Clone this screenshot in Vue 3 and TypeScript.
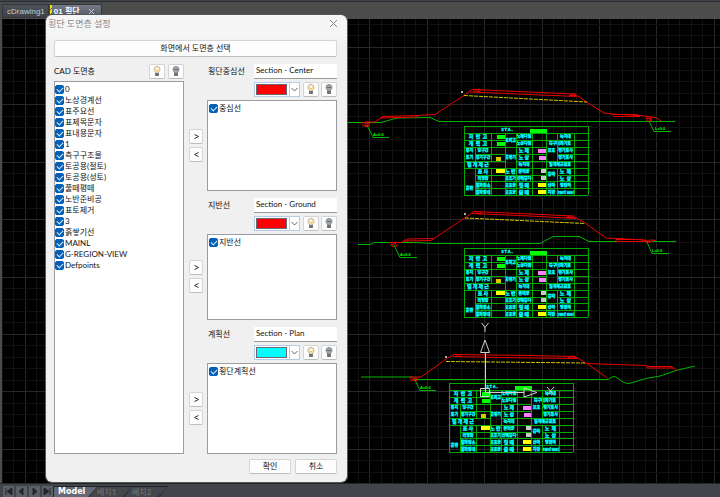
<script setup lang="ts">
import { ref } from 'vue'

interface Layer { name: string; on: boolean }
interface Section { title: string; target: string; color: string; layers: Layer[] }
interface Point { x: number; y: number }
interface Box { x: number; y: number; w: number; h: number; color: string }
interface Mark extends Point { text: string }
interface Stroke { pts: string; color: string; dash?: string }

const make = (names: string[]): Layer[] => names.map((name) => ({ name, on: true }))

const cadLayers = ref<Layer[]>(make([
  '0', '노상경계선', '표주요선', '표제목문자', '표내용문자', '1', '측구구조물',
  '토공용(절토)', '토공용(성토)', '풀떼평떼', '노반준비공', '표토제거', '3',
  '흙쌓기선', 'MAINL', 'G-REGION-VIEW', 'Defpoints',
]))

const sections = ref<Section[]>([
  { title: '횡단중심선', target: 'Section - Center', color: '#ff0000', layers: make(['중심선']) },
  { title: '지반선', target: 'Section - Ground', color: '#ff0000', layers: make(['지반선']) },
  { title: '계획선', target: 'Section - Plan', color: '#00ffff', layers: make(['횡단계획선']) },
])

const colors = [
  { value: '#ff0000', label: '빨강' },
  { value: '#00ffff', label: '하늘색' },
]

const navButtons = [
  { name: '처음', d: 'M3 2v7M9 2v7L4 5.500Z' },
  { name: '이전', d: 'M7 2v7L3 5.500Z' },
  { name: '다음', d: 'M4 2v7L8 5.500Z' },
  { name: '마지막', d: 'M8 2v7M2 2v7L7 5.500Z' },
]

// Background grid: a strong line after every five fine ones.
const STEP = 11.48
const gridLines = (first: number, count: number) =>
  Array.from({ length: count }, (_, i) => ({ at: first + i * STEP, major: i % 5 === 0 }))
const columns = gridLines(-32, 160)
const rows = gridLines(-10, 120)

// Quantity table, in units relative to its top-left corner.
const R = 6.93
const hLines = [
  [0, 0, 124.4], [1, 0, 124.4], [2, 0, 41], [2, 52, 124.4], [3, 0, 82.4], [3, 93, 124.4],
  [4, 11, 41], [4, 52, 82.4], [4, 93, 124.4], [5, 0, 41], [5, 52, 124.4], [6, 0, 124.4],
  [7, 11, 82.4], [7, 93, 124.4], [8, 11, 124.4], [9, 11, 124.4], [10, 0, 124.4],
]
const vLines = [
  [0, 0, 10], [11, 3, 5], [11, 6, 10], [27.3, 1, 5], [27.3, 6, 10], [41, 1, 10], [52, 1, 10],
  [68.4, 1, 10], [82.4, 1, 10], [93, 1, 5], [93, 6, 10], [110, 1, 10], [124.4, 0, 10],
]
const boxes: Box[] = [
  { x: 66, y: 3, w: 17, h: 4, color: '#00ff00' },
  { x: 33, y: 9, w: 8, h: 4, color: '#00ff00' },
  { x: 33, y: 16, w: 8, h: 4, color: '#00ff00' },
  { x: 74, y: 23, w: 8, h: 4, color: '#ff80ff' },
  { x: 75, y: 30, w: 7, h: 4, color: '#ff80ff' },
  { x: 32, y: 31, w: 5, h: 4, color: '#d8c800' },
  { x: 32, y: 43, w: 9, h: 4, color: '#ffff00' },
  { x: 77, y: 43, w: 5, h: 4, color: '#c8c8c8' },
  { x: 77, y: 50, w: 5, h: 4, color: '#c8c8c8' },
  { x: 74, y: 57, w: 8, h: 4, color: '#ffff00' },
  { x: 74, y: 64, w: 8, h: 4, color: '#ffff00' },
]
const cells: [number, number, string][] = [
  [43, 0, 'S T A .'],
  [14, 1, '지  반  고'], [46.5, 1.5, '토피고'], [60, 1, '노체다짐'], [101.5, 1, '녹지대'],
  [14, 2, '계  획  고'], [60, 2, '노상다짐'], [96, 2, '측구터파기토'],
  [5.5, 3, '용지'], [19, 3, '당구간'], [60, 3, '노 체'], [87.5, 3, '보호'], [101.5, 3, '깎기토사'],
  [5.5, 4, '토기'], [19, 4, '쌓기구간'], [46.5, 4, '흙깎기'], [60, 4, '노 상'], [101.5, 4, '쌓기토사'],
  [14, 5, '벌 개 제 근'], [60, 5, '녹지대'], [96, 5, '벌개제근표토'],
  [19, 6, '표 사'], [46.5, 6, '노 반'], [60, 6, '준비공'], [87.5, 6.5, '층따'], [101.5, 6, '노  체'],
  [19, 7, '리핑암'], [46.5, 7, '보조기'], [60, 7, '선택층다'], [101.5, 7, '노  상'],
  [5.5, 8.5, '흙깎'], [19, 8, '발파암소'], [46.5, 8, '보호공'], [60, 8, '평 떼'], [87.5, 8, '산마'], [101.5, 8, '평면적'],
  [19, 9, '발파암대'], [46.5, 9, '보호공'], [60, 9, '줄 떼'], [87.5, 9, '지반'], [101.5, 9, 'Rwd Wal'],
]
const isSpaced = (text: string) => /[가-힣] /.test(text)
const tables: Point[] = [{ x: 464, y: 126 }, { x: 464, y: 248 }, { x: 449, y: 383 }]

const red = '#e80000'
const green = '#00b400'
const yellow = '#d8c400'
const strokes: Stroke[] = [
  { color: green, pts: '348,122.5 381,122.5 397,118 430,117.5 439,121.5 487,121.5 675,121.5' },
  { color: red, pts: '362,122.5 367,122 375,122 383,116.5 417,115.5 435,114.5 463,96 472,89.5 530,92 575,94 585,101 604,113 612,114 640,115.5 656,117.5 661,121' },
  { color: red, pts: '380,118 417,117 417,115' },
  { color: red, pts: '470,92 530,94.5 577,96.5' },
  { color: red, pts: '473,90 480,89 480,91.5 474,91' },
  { color: red, pts: '569,95.5 574,93.5 576,95.5 569,95.5' },
  { color: red, pts: '612,114 614,116.5 640,116.5 637,114.5 614,114.5' },
  { color: yellow, dash: '4 1', pts: '464,95.5 587,102' },
  { color: red, pts: '363,122 363,126 369,126 369,123 365,123 366,127 368,122' },
  { color: green, pts: '367,125 373,137.5 389,137.5' },
  { color: red, pts: '646,118 651,118 651,121 647,121 647,118 652,120' },
  { color: green, pts: '649,121 654,131.5 671,131.5' },

  { color: green, pts: '358,244.5 370,244.5 374,242.5 416,242.5 434,243.5 540,243.5 553,236.5 579,236.5 589,241.5 676,241.5' },
  { color: red, pts: '389,242.5 401,242.5 407,239 434,238.5 466,217 474,211.5 530,214 573,216 585,223 606,238 645,240 650,242 656,240' },
  { color: red, pts: '404,241 431,240.5 433,239' },
  { color: red, pts: '472,213.5 530,216 576,218.5' },
  { color: red, pts: '475,212 481,211.5 481,214 476,213.5' },
  { color: red, pts: '566,217.5 571,215.5 573,217.5 566,217.5' },
  { color: red, pts: '616,239.5 616,241.5 645,241.5 641,239.5 616,239.5' },
  { color: yellow, dash: '4 1', pts: '465,218 585,223.5' },
  { color: red, pts: '391,243 392,246.5 397,246 395,243 392,245' },
  { color: green, pts: '394,245 400,257.5 417,257.5' },
  { color: red, pts: '644,240 648,243 649,240 654,240' },
  { color: green, pts: '647,242 652,253.5 669,253.5' },

  { color: green, pts: '361,377 412,377 415,379.5 608,379.5 612,377 615,376.5 619,379 623,382 627,383.5 631,383 646,378.5 660,376 676,370.5 695,366' },
  { color: red, pts: '409,377 421,377 447,358.5 454,354.5 530,355.5 575,356.5 586,363 608,378.5' },
  { color: red, pts: '453,356.5 500,357.5 577,358.5' },
  { color: red, pts: '456,355 461,354.5 461,356.5 456,356.5' },
  { color: red, pts: '568,357.5 573,356 576,358 568,358' },
  { color: red, pts: '586,363.5 647,365.5 647,368 673,368 670,366.5 647,366.5 671,366.5 677,370.5' },
  { color: yellow, dash: '4 1', pts: '446,361.5 586,363' },
  { color: red, pts: '411,377 411,380.5 417,380.5 416,377.5 412,380' },
  { color: green, pts: '415,380 420,390.5 436,390.5' },
]
const marks: Mark[] = [
  { x: 373, y: 136, text: 'A=0.0' }, { x: 655, y: 130, text: 'L=0.0' },
  { x: 400, y: 256, text: 'A=0.0' }, { x: 652, y: 252, text: 'L=0.0' },
  { x: 420, y: 389, text: 'A=0.0' },
]
const dots: Point[] = [{ x: 461, y: 91 }, { x: 464, y: 213 }, { x: 445, y: 356 }]
</script>

<template>
  <main class="app">
    <nav class="files">
      <button class="file" type="button">cDrawing1</button>
      <button class="file current" type="button">
        <b>01 횡단</b>
        <svg width="7" height="7" viewBox="0 0 7 7"><path d="M1 1l5 5M6 1l-5 5" stroke="#c8ccd0" fill="none" /></svg>
      </button>
    </nav>

    <div class="canvas">
      <svg width="100%" height="100%">
        <g transform="translate(-2 -19)" fill="none">
          <g shape-rendering="crispEdges">
            <line v-for="(l, i) in columns" :key="'c' + i" :x1="l.at" :x2="l.at" y1="0" y2="1400" :stroke="l.major ? '#282828' : '#111111'" />
            <line v-for="(l, i) in rows" :key="'r' + i" :y1="l.at" :y2="l.at" x1="0" x2="1900" :stroke="l.major ? '#282828' : '#111111'" />
          </g>
          <polyline v-for="(s, i) in strokes" :key="'s' + i" :points="s.pts" :stroke="s.color" :stroke-dasharray="s.dash" />
          <text v-for="(m, i) in marks" :key="'m' + i" :x="m.x" :y="m.y" class="mark">{{ m.text }}</text>
          <rect v-for="(d, i) in dots" :key="'d' + i" :x="d.x" :y="d.y" width="2" height="2" fill="#b0b0b0" />
          <g v-for="(t, i) in tables" :key="'t' + i" :transform="`translate(${t.x} ${t.y})`">
            <rect v-for="(b, j) in boxes" :key="'b' + j" :x="b.x" :y="b.y" :width="b.w" :height="b.h" :fill="b.color" />
            <text v-for="(c, j) in cells" :key="'x' + j" :x="c[0]" :y="c[1] * R + 5.4" class="cell" :class="{ spaced: isSpaced(c[2]) }">{{ c[2] }}</text>
            <g stroke="#00a800" shape-rendering="crispEdges">
              <path v-for="(h, j) in hLines" :key="'h' + j" :d="`M${h[1]} ${h[0] * R + 0.5}H${h[2]}`" />
              <path v-for="(v, j) in vLines" :key="'v' + j" :d="`M${v[0] + 0.5} ${v[1] * R}V${v[2] * R}`" />
            </g>
          </g>
          <g stroke="#d0d0d0">
            <path d="M485.500 352V392.500H524M480.500 388.500h9v8h-9ZM485 340l-4.500 12.500h9ZM524 388l13 4.500l-13 4.500Z" />
            <path d="M481.500 323l3.500 4.500l3.500-4.500M485 327.500V332M547 387l7 8M554 387l-7 8" />
          </g>
        </g>
      </svg>
    </div>

    <footer class="sheets">
      <button v-for="n in navButtons" :key="n.name" class="nav" type="button" :aria-label="n.name">
        <svg width="11" height="11" viewBox="0 0 11 11"><path :d="n.d" fill="#23262a" stroke="#23262a" /></svg>
      </button>
      <button class="sheet active" type="button"><span>Model</span></button>
      <button class="sheet second" type="button"><span>배치1</span></button>
      <button class="sheet" type="button"><span>배치2</span></button>
    </footer>

    <section class="dialog" role="dialog" aria-labelledby="dialog-title">
      <header class="title">
        <h1 id="dialog-title">횡단 도면층 설정</h1>
        <button type="button" class="close" aria-label="닫기">
          <svg width="9" height="9" viewBox="0 0 9 9"><path d="M1 1l7 7M8 1l-7 7" stroke="#8a8a8a" fill="none" /></svg>
        </button>
      </header>

      <button type="button" class="btn pick">화면에서 도면층 선택</button>

      <div class="body">
        <div class="source">
          <div class="head">
            <h2>CAD 도면층</h2>
            <button type="button" class="btn bulb" aria-label="모두 켜기">
              <svg width="8" height="11" viewBox="0 0 8 11"><path d="M2.500 7C2.500 5.500 1 5 1 3.500a3 3 0 0 1 6 0C7 5 5.500 5.500 5.500 7Z" fill="#fff6d8" stroke="#b8ae98" /><path d="M2.500 3.500L4 5.500l1.500-2" stroke="#f0b428" fill="none" /><path d="M2.500 7.500h3v2h-3z" fill="#777" stroke="#6c6c6c" /></svg>
            </button>
            <button type="button" class="btn bulb" aria-label="모두 끄기">
              <svg width="8" height="11" viewBox="0 0 8 11"><path d="M2.500 7C2.500 5.500 1 5 1 3.500a3 3 0 0 1 6 0C7 5 5.500 5.500 5.500 7Z" fill="#a0a6ae" stroke="#868c94" /><path d="M2 3.500h4" stroke="#686e76" /><path d="M2.500 7.500h3v2h-3z" fill="#777" stroke="#6c6c6c" /></svg>
            </button>
          </div>
          <ul class="list">
            <li v-for="layer in cadLayers" :key="layer.name">
              <label><input v-model="layer.on" type="checkbox" />{{ layer.name }}</label>
            </li>
          </ul>
        </div>

        <div class="targets">
          <section v-for="(s, i) in sections" :key="s.title" class="target">
            <label class="name" :for="'target-' + i">{{ s.title }}</label>
            <input :id="'target-' + i" v-model="s.target" class="field" type="text" />
            <div class="tools">
              <label class="combo">
                <span class="swatch" :style="{ background: s.color }"></span>
                <span class="drop"><svg width="7" height="5" viewBox="0 0 7 5"><path d="M0.500 1l3 3L6.500 1" stroke="#666" fill="none" /></svg></span>
                <select v-model="s.color" :aria-label="s.title + ' 색상'">
                  <option v-for="c in colors" :key="c.value" :value="c.value">{{ c.label }}</option>
                </select>
              </label>
              <button type="button" class="btn bulb" aria-label="켜기">
                <svg width="8" height="11" viewBox="0 0 8 11"><path d="M2.500 7C2.500 5.500 1 5 1 3.500a3 3 0 0 1 6 0C7 5 5.500 5.500 5.500 7Z" fill="#fff6d8" stroke="#b8ae98" /><path d="M2.500 3.500L4 5.500l1.500-2" stroke="#f0b428" fill="none" /><path d="M2.500 7.500h3v2h-3z" fill="#777" stroke="#6c6c6c" /></svg>
              </button>
              <button type="button" class="btn bulb" aria-label="끄기">
                <svg width="8" height="11" viewBox="0 0 8 11"><path d="M2.500 7C2.500 5.500 1 5 1 3.500a3 3 0 0 1 6 0C7 5 5.500 5.500 5.500 7Z" fill="#a0a6ae" stroke="#868c94" /><path d="M2 3.500h4" stroke="#686e76" /><path d="M2.500 7.500h3v2h-3z" fill="#777" stroke="#6c6c6c" /></svg>
              </button>
            </div>
            <div class="arrows">
              <button type="button" class="btn arrow" :aria-label="s.title + ' 추가'">
                <svg width="7" height="7" viewBox="0 0 7 7"><path d="M1.500 1.500L5.500 3.500L1.500 5.500" stroke="#333" fill="none" /></svg>
              </button>
              <button type="button" class="btn arrow" :aria-label="s.title + ' 제거'">
                <svg width="7" height="7" viewBox="0 0 7 7"><path d="M5.500 1.500L1.500 3.500L5.500 5.500" stroke="#333" fill="none" /></svg>
              </button>
            </div>
            <ul class="list">
              <li v-for="layer in s.layers" :key="layer.name">
                <label><input v-model="layer.on" type="checkbox" />{{ layer.name }}</label>
              </li>
            </ul>
          </section>
        </div>
      </div>

      <div class="actions">
        <button type="button" class="btn">확인</button>
        <button type="button" class="btn">취소</button>
      </div>
    </section>
  </main>
</template>

<style>
body { background: #000; }
</style>

<style scoped>
* { box-sizing: border-box; }
.app {
  position: relative;
  display: grid;
  grid-template-rows: 19px 1fr 14px;
  height: 100vh;
  overflow: hidden;
  background: #4b4c4e;
  font-family: Lato, "Noto Sans CJK KR", sans-serif;
  font-size: 8px;
  line-height: 11px;
  color: #111;
}
button { padding: 0; border: 0; font: inherit; color: inherit; }
svg { display: block; }
h1, h2, ul { margin: 0; padding: 0; font: inherit; list-style: none; }

.files {
  display: flex;
  gap: 1px;
  padding: 3px 2px 1px;
  border-top: 1px solid #3c4247;
  background: #4c4c4d;
  box-shadow: inset 0 1px #2b2e31;
}
.file {
  padding: 0 3px 0 4px;
  border: 1px solid #34373b;
  background: linear-gradient(#4e5258, #3e4248);
  color: #c4c6ca;
  font-family: "Liberation Sans", "Noto Sans CJK KR", sans-serif;
}
.file.current {
  display: flex;
  align-items: center;
  gap: 8px;
  padding: 0 6px 0 4px;
  border-left: 0;
  background:
    repeating-linear-gradient(135deg, #f0e000 0 3px, #6a6420 3px 4px) 0 0 / 2px 100% no-repeat,
    linear-gradient(#737985, #555b66);
  color: #fff;
}

.canvas { min-height: 0; margin-left: 2px; overflow: hidden; background: #000; }
.cell {
  fill: #00ffff;
  stroke: #00ffff;
  stroke-width: 0.3px;
  font: bold 4px "Noto Sans CJK KR", sans-serif;
  text-anchor: middle;
  white-space: pre;
}
.cell.spaced { font-size: 5px; }
.mark { fill: #00ff00; font: bold 4px "Liberation Sans", sans-serif; }

.sheets {
  display: flex;
  gap: 2px;
  padding: 2px 3px 0;
  border-top: 1px solid #24272a;
  background: #414448;
}
.nav { display: grid; place-items: center; width: 11px; height: 11px; background: #5b6067; }
.sheet {
  width: 45px;
  height: 12px;
  margin-right: -12px;
  padding: 1px 0 1px 1px;
  background: #202327;
  clip-path: polygon(0 0, 100% 0, 78% 100%, 0 100%);
  color: #73767a;
}
.sheet span {
  display: block;
  padding-left: 8px;
  background: #43464a;
  clip-path: polygon(0 0, 98% 0, 77% 100%, 0 100%);
  line-height: 10px;
  text-align: left;
}
.sheet.second { z-index: 1; }
.sheet.active { z-index: 2; margin-left: -2px; color: #fff; font: bold 8px "DejaVu Sans", sans-serif; }
.sheet.active span { padding-left: 4px; background: #646a75; }

.dialog {
  position: absolute;
  top: 15px;
  left: 46px;
  display: flex;
  flex-direction: column;
  width: 301px;
  height: 467px;
  padding: 0 10px 8px 8px;
  border-radius: 6px;
  background: linear-gradient(#f5f5f5 20px, #f0f0f0 32px);
  box-shadow: 0 0 0 1px #55585a;
}
.title { display: flex; justify-content: space-between; align-items: center; height: 16px; margin: 0 -3px 0 -6px; color: #8a8a8a; font-size: 9px; }
.close { padding: 2px; background: none; }
.btn {
  display: grid;
  place-items: center;
  height: 15px;
  border: 1px solid #d4d4d4;
  border-bottom-color: #bdbdbd;
  border-radius: 2px;
  background: #fdfdfd;
}
.pick { height: 17px; margin: 9px 0 7px; }
.body { display: grid; flex: 1; grid-template-columns: 130px 1fr; gap: 5px; min-height: 0; }
.source { display: flex; flex-direction: column; gap: 2px; }
.head { display: flex; align-items: center; gap: 3px; }
.head h2 { flex: 1; }
.bulb { width: 16px; }
.list { flex: 1; padding: 2px 0; border: 1px solid #9a9da3; background: #fff; overflow: hidden; }
.target .list { padding-left: 1px; }
.list label { display: flex; align-items: center; gap: 1px; height: 11px; white-space: nowrap; }
.list input {
  display: grid;
  place-items: center;
  width: 9px;
  height: 9px;
  margin: 0;
  border: 1px solid #888;
  border-radius: 2px;
  background: #fff;
  appearance: none;
}
.list input:checked { border-color: #005fb8; background: #005fb8; }
.list input:checked::after {
  width: 5px;
  height: 3px;
  margin-bottom: 1px;
  border: solid #d8e8f8;
  border-width: 0 0 1px 1px;
  content: "";
  transform: rotate(-45deg);
}

.targets { display: grid; grid-template-rows: 31fr 30fr 31fr; gap: 7px; min-height: 0; }
.target {
  display: grid;
  grid-template-columns: 14px 43px 1fr;
  grid-template-rows: 15px 15px 1fr;
  gap: 3px 4px;
  min-height: 0;
}
.name { grid-column: 2; align-self: center; margin-left: 1px; white-space: nowrap; }
.field {
  min-width: 0;
  width: 100%;
  padding: 0 2px 1px;
  border: 0;
  border-bottom: 1px solid #9a9a9a;
  background: #fff;
  color: inherit;
  font: inherit;
}
.tools { display: flex; grid-column: 3; justify-content: space-between; }
.combo { display: grid; grid-template-columns: 1fr 10px; gap: 2px; width: 46px; height: 15px; border: 1px solid #b4cce4; background: #fff; }
.swatch { grid-area: 1 / 1; margin: 1px 0 1px 1px; border: 1px solid #667; }
.drop { display: grid; grid-area: 1 / 2; place-items: center; border-left: 1px solid #b4cce4; }
.combo select { grid-area: 1 / 1 / 2 / 3; width: 100%; min-width: 0; height: 13px; opacity: 0; }
.arrows { display: grid; align-content: center; gap: 3px; grid-column: 1; grid-row: 3; }
.target .list { grid-column: 2 / 4; grid-row: 3; }

.actions { display: flex; justify-content: flex-end; gap: 4px; margin-top: 5px; }
.actions .btn { width: 42px; }
</style>
